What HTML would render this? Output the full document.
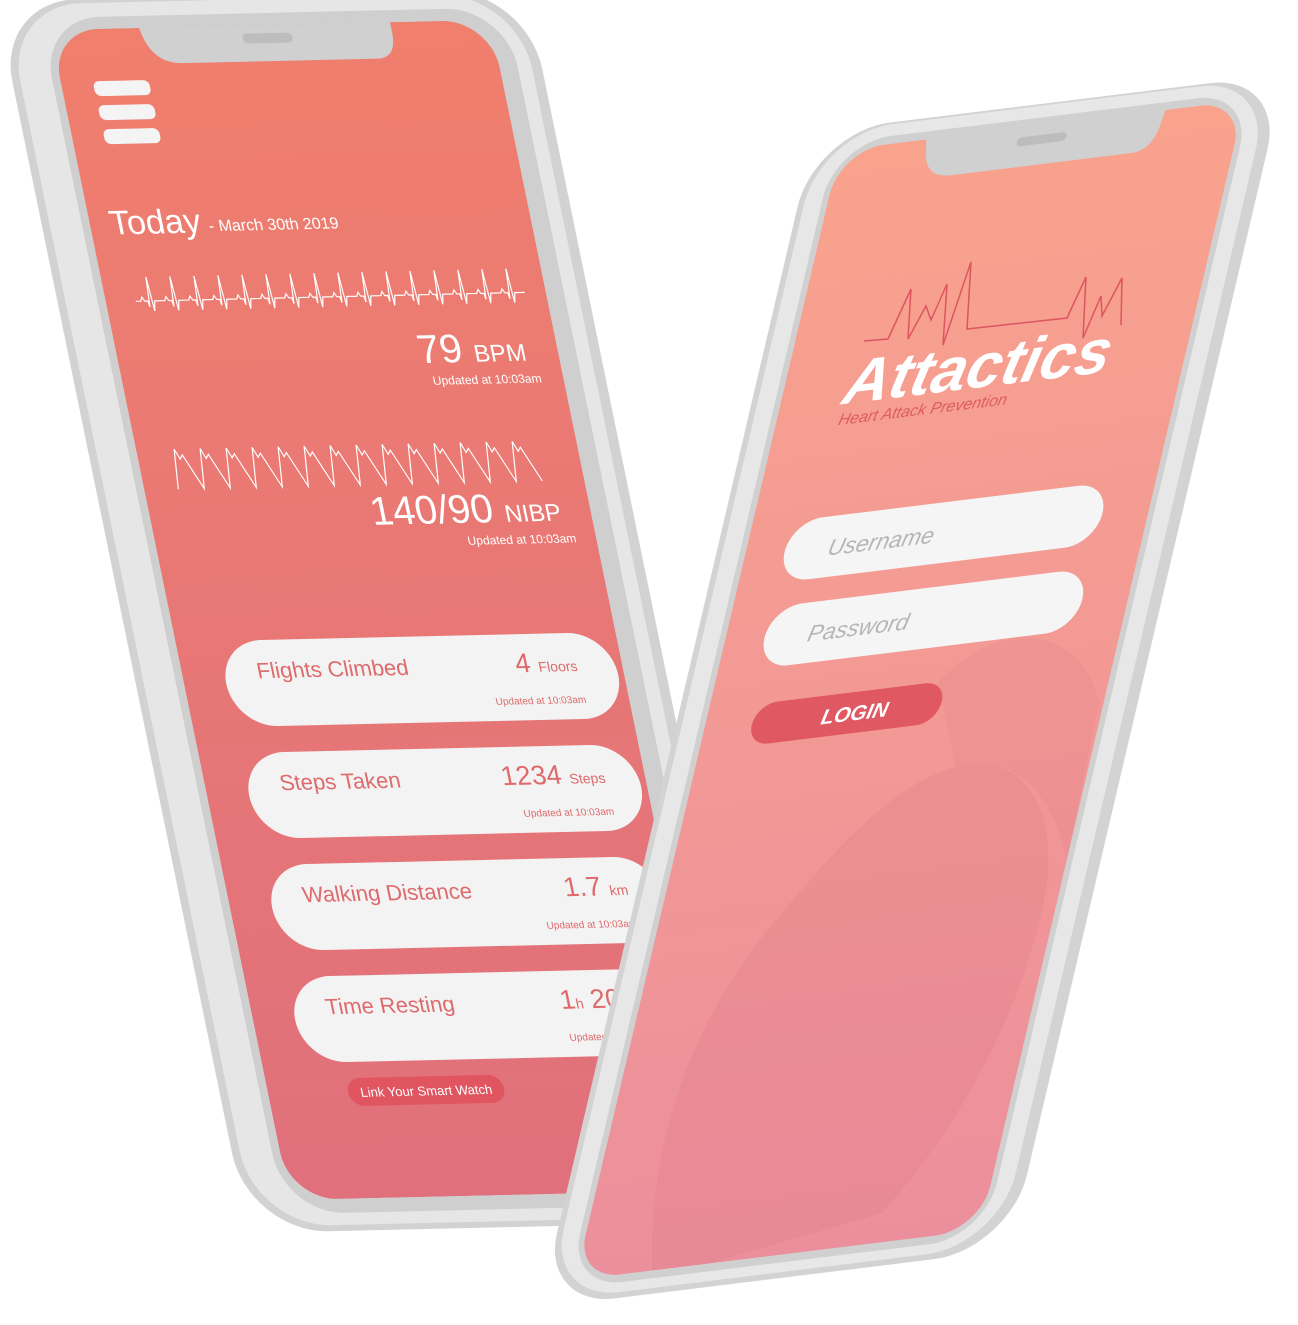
<!DOCTYPE html>
<html><head><meta charset="utf-8"><style>
html,body{margin:0;padding:0;background:#fff;}
svg{display:block}
text{font-family:"Liberation Sans",sans-serif;}
</style></head><body>
<svg width="1298" height="1325" viewBox="0 0 1298 1325" xmlns="http://www.w3.org/2000/svg">
<defs>
<linearGradient id="gl" x1="0" y1="0" x2="0" y2="1"><stop offset="0" stop-color="#f07f6e"/><stop offset="1" stop-color="#e0707c"/></linearGradient>
<linearGradient id="gr" x1="0" y1="0" x2="0" y2="1"><stop offset="0" stop-color="#f9a38d"/><stop offset="1" stop-color="#ec8f9c"/></linearGradient>
<clipPath id="cl"><rect x="0" y="0" width="440" height="1170" rx="48"/></clipPath>
<clipPath id="cr"><rect x="0" y="0" width="405" height="1130" rx="45"/></clipPath>
</defs>

<!-- LEFT PHONE -->
<g transform="matrix(1,-0.023,0.205,1,50,30)">
  <rect x="-48" y="-30" width="530" height="1232" rx="80" fill="#d2d2d2"/>
  <rect x="-40" y="-26" width="512" height="1222" rx="76" fill="#e6e6e6"/>
  <rect x="-8" y="-12" width="466" height="1196" rx="60" fill="#cfcfcf"/>
  <g clip-path="url(#cl)">
    <rect x="0" y="0" width="440" height="1170" fill="url(#gl)"/>
    <path d="M88,-5 L90,5 Q96,36 125,36 L320,36 Q340,36 340,10 L340,-5 Z" fill="#d0d0d0"/>
    <rect x="190" y="8" width="50" height="10" rx="5" fill="#bdbdbd"/>
    <rect x="32" y="52" width="56" height="15" rx="6" fill="#f4f4f4"/>
    <rect x="32" y="76" width="56" height="15" rx="6" fill="#f4f4f4"/>
    <rect x="32" y="100" width="56" height="15" rx="6" fill="#f4f4f4"/>
    <text x="20" y="205" font-size="34" fill="#fff">Today</text>
    <text x="118" y="204" font-size="16" fill="#fff">- March 30th 2019</text>
    <path d="M30,272 l5 0 l2 -4 l2 4 l3 0 l1 6 l2 -30 l2 34 l2 -10 l5 0 l5 0 l2 -4 l2 4 l3 0 l1 6 l2 -30 l2 34 l2 -10 l5 0 l5 0 l2 -4 l2 4 l3 0 l1 6 l2 -30 l2 34 l2 -10 l5 0 l5 0 l2 -4 l2 4 l3 0 l1 6 l2 -30 l2 34 l2 -10 l5 0 l5 0 l2 -4 l2 4 l3 0 l1 6 l2 -30 l2 34 l2 -10 l5 0 l5 0 l2 -4 l2 4 l3 0 l1 6 l2 -30 l2 34 l2 -10 l5 0 l5 0 l2 -4 l2 4 l3 0 l1 6 l2 -30 l2 34 l2 -10 l5 0 l5 0 l2 -4 l2 4 l3 0 l1 6 l2 -30 l2 34 l2 -10 l5 0 l5 0 l2 -4 l2 4 l3 0 l1 6 l2 -30 l2 34 l2 -10 l5 0 l5 0 l2 -4 l2 4 l3 0 l1 6 l2 -30 l2 34 l2 -10 l5 0 l5 0 l2 -4 l2 4 l3 0 l1 6 l2 -30 l2 34 l2 -10 l5 0 l5 0 l2 -4 l2 4 l3 0 l1 6 l2 -30 l2 34 l2 -10 l5 0 l5 0 l2 -4 l2 4 l3 0 l1 6 l2 -30 l2 34 l2 -10 l5 0 l5 0 l2 -4 l2 4 l3 0 l1 6 l2 -30 l2 34 l2 -10 l5 0 l5 0 l2 -4 l2 4 l3 0 l1 6 l2 -30 l2 34 l2 -10 l5 0 l5 0 l2 -4 l2 4 l3 0 l1 6 l2 -30 l2 34 l2 -10 l5 0 l5 0" fill="none" stroke="#fff" stroke-width="1.2"/>
    <text x="408" y="340" font-size="40" fill="#fff" text-anchor="end">79 <tspan font-size="24">BPM</tspan></text>
    <text x="418" y="362" font-size="12" fill="#fff" text-anchor="end">Updated at 10:03am</text>
    <path d="M34,460 l4 -40 l4 10 l3 -4 l15 34 l4 -40 l4 10 l3 -4 l15 34 l4 -40 l4 10 l3 -4 l15 34 l4 -40 l4 10 l3 -4 l15 34 l4 -40 l4 10 l3 -4 l15 34 l4 -40 l4 10 l3 -4 l15 34 l4 -40 l4 10 l3 -4 l15 34 l4 -40 l4 10 l3 -4 l15 34 l4 -40 l4 10 l3 -4 l15 34 l4 -40 l4 10 l3 -4 l15 34 l4 -40 l4 10 l3 -4 l15 34 l4 -40 l4 10 l3 -4 l15 34 l4 -40 l4 10 l3 -4 l15 34 l4 -40 l4 10 l3 -4 l15 34" fill="none" stroke="#fff" stroke-width="1.2"/>
    <text x="410" y="500" font-size="40" fill="#fff" text-anchor="end">140/90 <tspan font-size="24">NIBP</tspan></text>
    <text x="420" y="522" font-size="12" fill="#fff" text-anchor="end">Updated at 10:03am</text>
    <g fill="#f3f3f3">
      <rect x="42" y="612" width="392" height="86" rx="43"/>
      <rect x="42" y="724" width="392" height="86" rx="43"/>
      <rect x="42" y="836" width="392" height="86" rx="43"/>
      <rect x="42" y="948" width="392" height="86" rx="43"/>
    </g>
    <g fill="#de6a6c">
      <text x="75" y="650" font-size="22">Flights Climbed</text>
      <text x="395" y="650" font-size="27" text-anchor="end">4 <tspan font-size="14">Floors</tspan></text>
      <text x="397" y="682" font-size="10" text-anchor="end">Updated at 10:03am</text>
      <text x="75" y="762" font-size="22">Steps Taken</text>
      <text x="400" y="762" font-size="27" text-anchor="end">1234 <tspan font-size="14">Steps</tspan></text>
      <text x="402" y="794" font-size="10" text-anchor="end">Updated at 10:03am</text>
      <text x="75" y="874" font-size="22">Walking Distance</text>
      <text x="400" y="874" font-size="27" text-anchor="end">1.7 <tspan font-size="14">km</tspan></text>
      <text x="402" y="906" font-size="10" text-anchor="end">Updated at 10:03am</text>
      <text x="75" y="986" font-size="22">Time Resting</text>
      <text x="400" y="986" font-size="27" text-anchor="end">1<tspan font-size="14">h</tspan> 20 <tspan font-size="14">min</tspan></text>
      <text x="402" y="1018" font-size="10" text-anchor="end">Updated at 10:03am</text>
    </g>
    <rect x="80" y="1050" width="156" height="28" rx="14" fill="#e05560"/>
    <text x="158" y="1069" font-size="13" fill="#fff" text-anchor="middle">Link Your Smart Watch</text>
  </g>
</g>

<!-- RIGHT PHONE -->
<g transform="matrix(1,-0.123,-0.2345,1,840,150)">
  <rect x="-30" y="-22" width="470" height="1176" rx="75" fill="#d3d3d3"/>
  <rect x="-24" y="-20" width="452" height="1168" rx="72" fill="#e7e7e7"/>
  <rect x="-6" y="-8" width="417" height="1146" rx="55" fill="#d0d0d0"/>
  <g clip-path="url(#cr)">
    <rect x="0" y="0" width="405" height="1130" fill="url(#gr)"/>
    <path d="M268,650 C330,640 380,700 390,780 C400,900 360,1020 300,1100 L80,1140 C40,1000 60,880 110,800 C150,740 200,660 268,650 Z" fill="#d86f80" opacity="0.18"/>
    <path d="M230,560 C280,500 360,520 400,600 L405,760 C380,700 330,640 268,650 Z" fill="#d86f80" opacity="0.12"/>
    <path d="M85,-5 L88,8 Q92,40 120,40 L300,40 Q322,40 324,12 L326,-5 Z" fill="#d0d0d0"/>
    <rect x="180" y="10" width="50" height="9" rx="4.5" fill="#bdbdbd"/>
    <text x="62" y="262" font-size="63" font-weight="bold" font-style="italic" fill="#fff">Attactics</text>
    <text x="64" y="283" font-size="16" font-style="italic" fill="#dc5b60">Heart Attack Prevention</text>
    <rect x="40" y="376" width="318" height="62" rx="31" fill="#f5f5f5"/>
    <rect x="40" y="462" width="318" height="62" rx="31" fill="#f5f5f5"/>
    <text x="84" y="416" font-size="23" font-style="italic" fill="#b5b5b5">Username</text>
    <text x="84" y="502" font-size="23" font-style="italic" fill="#b5b5b5">Password</text>
    <rect x="48" y="560" width="190" height="42" rx="21" fill="#e05862"/>
    <text x="118" y="589" font-size="21" font-weight="bold" font-style="italic" fill="#fff">LOGIN</text>
  </g>
</g>
<path d="M864,341 L888,339 L911,289 L908,339 L926,306 L931,320 L947,284 L943,345 L971,262 L967,329 L1067,318 L1086,277 L1083,338 L1101,296 L1102,316 L1122,278 L1121,325" fill="none" stroke="#dc5560" stroke-width="1.5"/>
</svg>
</body></html>
